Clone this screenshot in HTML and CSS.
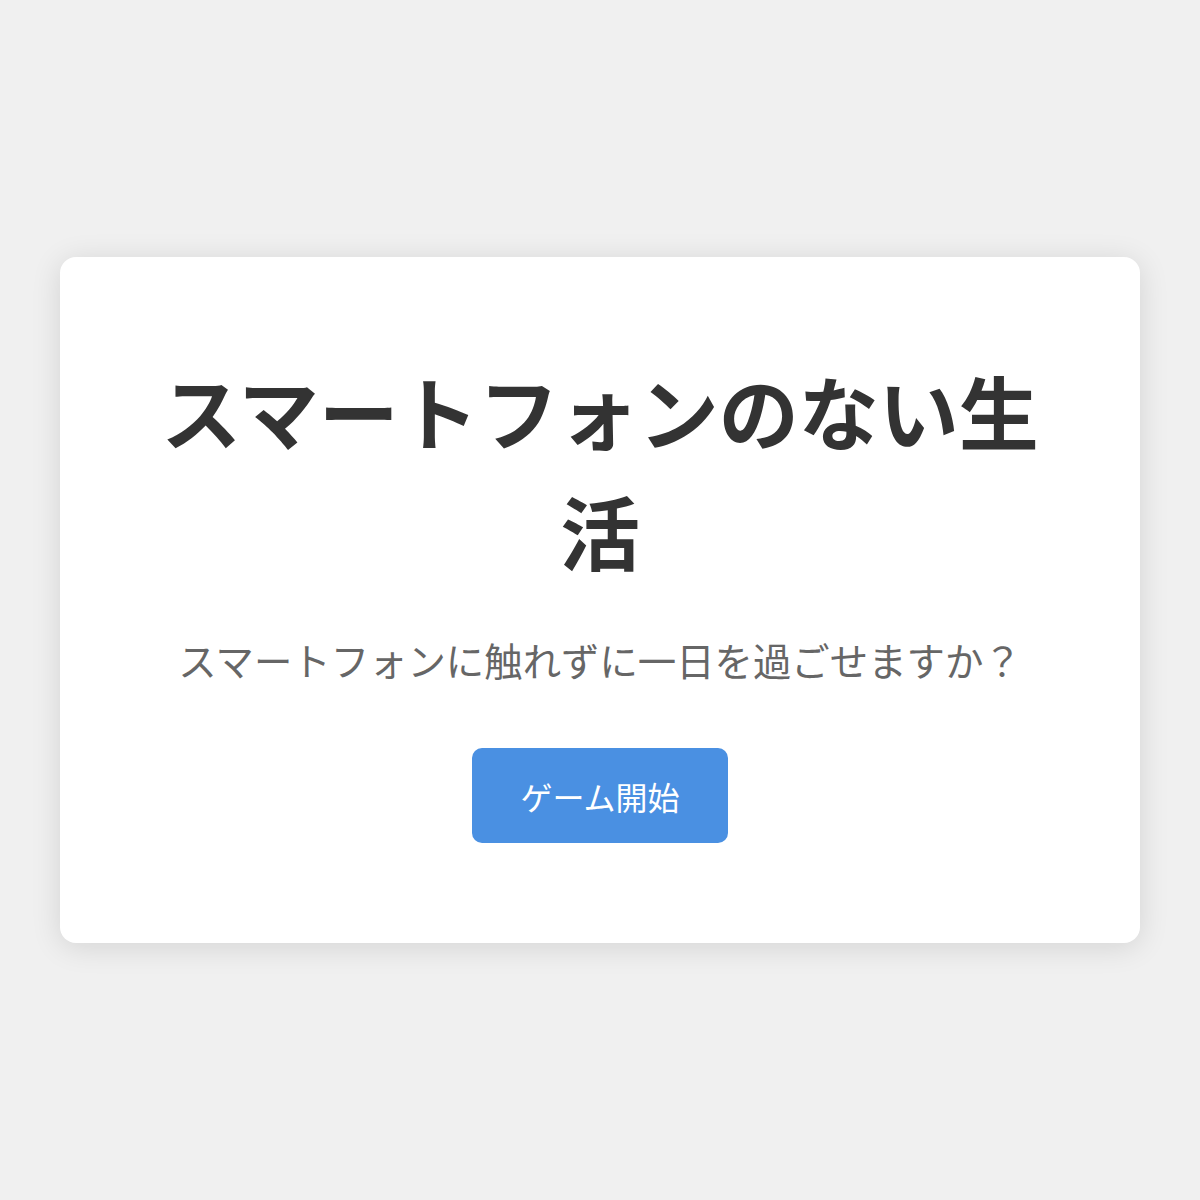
FILE: index.html
```html
<!DOCTYPE html>
<html lang="ja">
<head>
  <meta charset="UTF-8" />
  <meta name="viewport" content="width=device-width, initial-scale=1.0" />
  <title>スマートフォンのない生活</title>
  <link rel="stylesheet" href="styles.css">
</head>
<body>
  <main class="container">
    <!-- Start screen -->
    <section class="start-card">
      <h1 class="title">スマートフォンのない生活</h1>
      <p class="subtitle">スマートフォンに触れずに一日を過ごせますか？</p>
      <button class="start-btn" type="button">ゲーム開始</button>
    </section>
  </main>
</body>
</html>
```

FILE: styles.css
```css
* {
  box-sizing: border-box;
  font-family: 'Noto Sans CJK JP', 'Noto Sans', sans-serif;
}

html, body {
  margin: 0;
  padding: 0;
  background-color: #f0f0f0;
  color: #333;
}

.container {
  min-height: 100vh;
  display: flex;
  justify-content: center;
  align-items: center;
  padding: 0 60px;
}

.start-card {
  width: 100%;
  background-color: #fff;
  border-radius: 16px;
  box-shadow: 0 4px 30px rgba(0, 0, 0, 0.12);
  padding: 92px 80px 100px;
  display: flex;
  flex-direction: column;
  align-items: center;
  text-align: center;
}

.title {
  margin: 0;
  font-size: 80px;
  font-weight: 700;
  line-height: 1.5;
  color: #333;
}

.subtitle {
  margin: 42px 0 0;
  font-size: 38.4px;
  line-height: 1.5;
  color: #666;
}

.start-btn {
  margin-top: 60px;
  padding: 23.5px 48px;
  font-size: 32px;
  line-height: 1.5;
  color: white;
  background-color: #4a90e2;
  border: none;
  border-radius: 10px;
  cursor: pointer;
}

.start-btn:hover {
  background-color: #357abd;
}
```
